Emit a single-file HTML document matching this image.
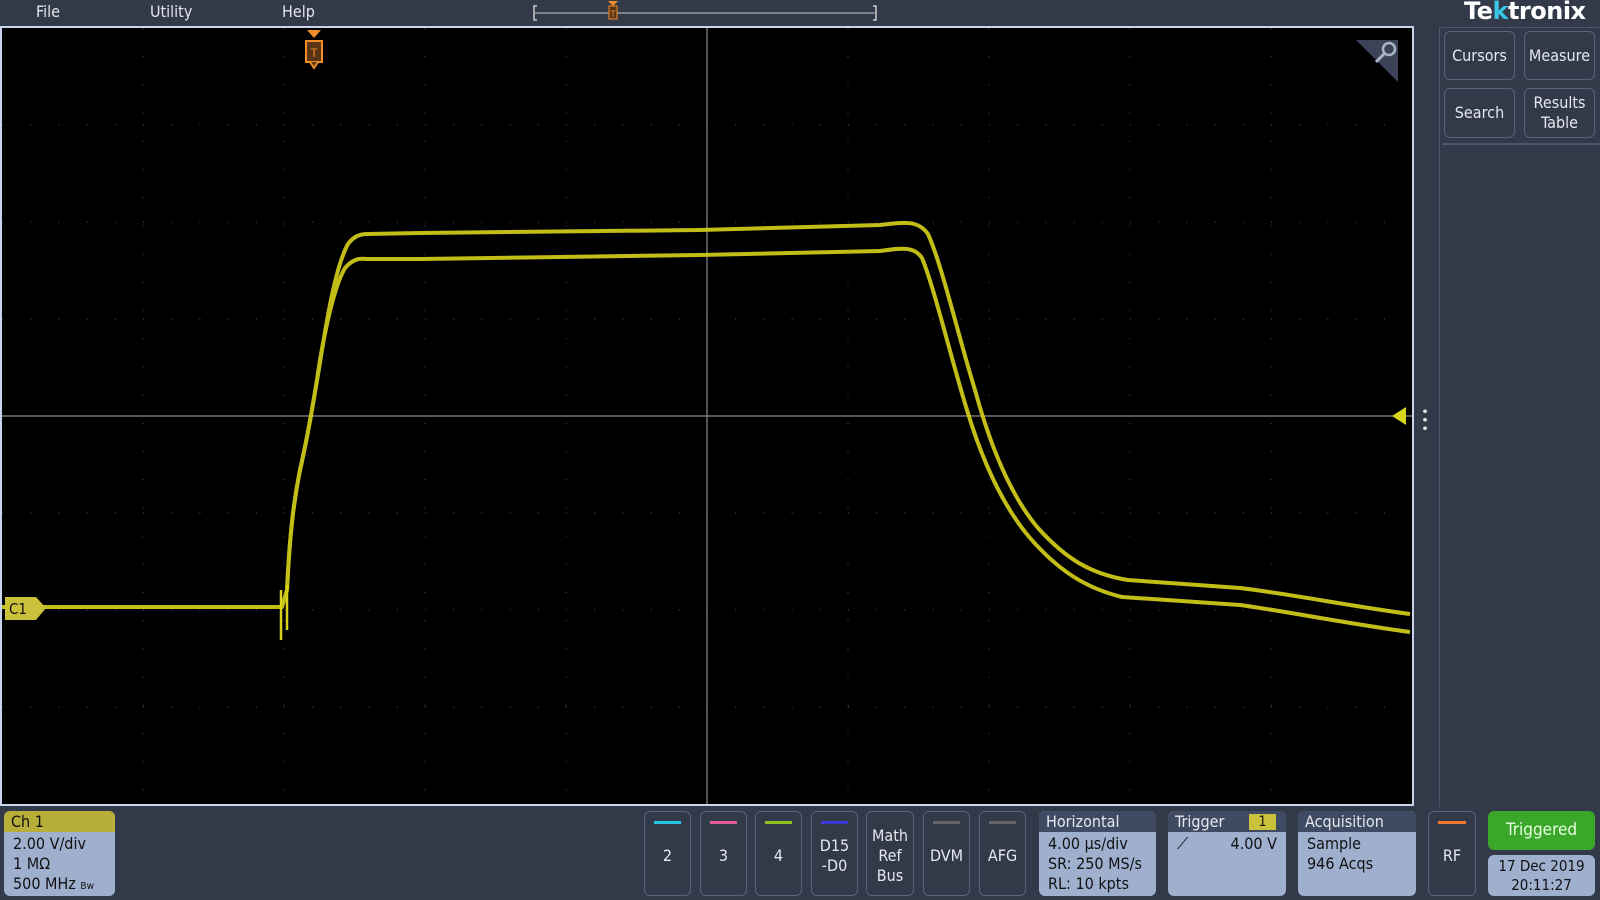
<!DOCTYPE html>
<html><head><meta charset="utf-8"><style>
*{margin:0;padding:0;box-sizing:border-box}
body{width:1600px;height:900px;background:#323948;font-family:"DejaVu Sans Condensed","Liberation Sans",sans-serif;color:#e6e8ee;position:relative;overflow:hidden}
.a{position:absolute}
.menu{font-size:16px;top:2px;color:#e4e6ec}
.btn{position:absolute;border:1px solid #59627a;border-radius:6px;background:#323948;color:#e6e8ee;font-size:16px;text-align:center;display:flex;align-items:center;justify-content:center;line-height:20px}
.bb{position:absolute;top:811px;height:85px;border:1px solid #59627a;border-radius:6px;text-align:center;font-size:16px;color:#e6e8ee}
.bb .ln{position:absolute;left:9px;right:9px;top:9px;height:3px}
.bb .tx{position:absolute;left:0;right:0;top:0;bottom:0;display:flex;align-items:center;justify-content:center;line-height:20px;padding-top:4px}
.panel{position:absolute;top:811px;height:85px;border-radius:6px;background:#9fb0cf;color:#111;font-size:16px;overflow:hidden}
.panel .hd{height:21px;background:#3f4b63;color:#e6e8ee;padding-left:7px;line-height:21px}
.panel .bd{padding:2px 9px;line-height:20px}
</style></head><body>
<div class="a menu" style="left:36px">File</div>
<div class="a menu" style="left:150px">Utility</div>
<div class="a menu" style="left:282px">Help</div>
<svg class="a" style="left:530px;top:0" width="350" height="27">
<path d="M7 6H4V20H7M343 6H346V20H343" stroke="#ccc" fill="none" stroke-width="1.5"/>
<line x1="5" y1="13" x2="345" y2="13" stroke="#999" stroke-width="1.5"/>
<path d="M78 1h10l-5 5z" fill="#f28c28"/>
<rect x="79" y="6" width="8" height="13" fill="#5a3515" stroke="#f28c28"/>
<text x="83" y="17" font-size="9" fill="#f28c28" text-anchor="middle" font-family="Liberation Sans">T</text>
</svg>
<div class="a" style="left:0;top:26px;width:1414px;height:780px;background:#c8d4ee"></div>
<svg class="a" style="left:2px;top:28px" width="1410" height="776" viewBox="2 28 1410 776">
<rect x="2" y="28" width="1410" height="776" fill="#000"/>
<g stroke="#555" stroke-width="1" stroke-dasharray="1 27.2">
<line x1="143" y1="28" x2="143" y2="804"/><line x1="284" y1="28" x2="284" y2="804"/><line x1="425" y1="28" x2="425" y2="804"/><line x1="566" y1="28" x2="566" y2="804"/><line x1="848" y1="28" x2="848" y2="804"/><line x1="989" y1="28" x2="989" y2="804"/><line x1="1130" y1="28" x2="1130" y2="804"/><line x1="1271" y1="28" x2="1271" y2="804"/>
</g>
<g stroke="#555" stroke-width="1" stroke-dasharray="1 27.2">
<line x1="2" y1="125" x2="1412" y2="125"/><line x1="2" y1="222" x2="1412" y2="222"/><line x1="2" y1="319" x2="1412" y2="319"/><line x1="2" y1="513" x2="1412" y2="513"/><line x1="2" y1="610" x2="1412" y2="610"/><line x1="2" y1="707" x2="1412" y2="707"/>
</g>
<g stroke="#8a8a8a" stroke-width="1.2">
<line x1="707" y1="28" x2="707" y2="804"/><line x1="2" y1="416" x2="1412" y2="416"/>
</g>
<g stroke="#d8d21a" stroke-width="4" fill="none" opacity=".9" stroke-linejoin="round">
<path d="M2 607H282L287 590C290 530 294 500 300 470C307 440 314 400 322 350C330 300 338 262 348 244C354 236 360 234 368 234L420 233L700 230L880 225C905 222 918 220 928 234C942 265 958 335 975 390C990 445 1010 495 1038 528C1065 558 1090 574 1128 580L1240 588C1290 594 1350 606 1410 614"/>
<path d="M287 590C290 530 294 500 300 470C307 440 314 400 320 360C327 320 335 285 345 268C352 260 358 258 366 259L420 259L700 255L880 251C902 248 914 246 922 258C935 290 950 355 967 410C982 460 1002 505 1030 538C1058 570 1085 588 1122 597L1240 605C1290 612 1350 624 1410 632"/>
</g>
<path d="M281 590V640M287 585V630" stroke="#d8d21a" stroke-width="2.5"/>
<path d="M307 30h14l-7 8z" fill="#f28c28"/>
<rect x="306" y="41" width="16" height="21" fill="#5a3515" stroke="#f28c28" stroke-width="2"/>
<path d="M310 62l4 6l4-6" fill="#5a3515" stroke="#f28c28" stroke-width="2"/>
<text x="314" y="57" font-size="12" fill="#f28c28" text-anchor="middle" font-family="Liberation Sans">T</text>
<path d="M1356 40H1398V82Z" fill="#3c4356"/>
<circle cx="1389" cy="49" r="6" stroke="#aab3c8" stroke-width="2.5" fill="none"/>
<line x1="1384" y1="54" x2="1376" y2="62" stroke="#aab3c8" stroke-width="3"/>
<path d="M1392 416L1406 407V425Z" fill="#d8d21a"/>
<path d="M5 597H36L46 608L36 620H5Z" fill="#c9c13a"/>
<text x="9" y="614" font-size="15" fill="#111" font-family="DejaVu Sans Condensed">C1</text>
</svg>
<div class="a" style="left:1423px;top:407px;width:4px;height:25px;background:radial-gradient(circle,#ddd 1.8px,transparent 2px) 0 0/4px 8.5px"></div>
<div class="a" style="left:1439px;top:27px;width:161px;height:1px;background:#4d5569"></div>
<div class="a" style="left:1439px;top:27px;width:1px;height:780px;background:#4d5569"></div>
<div class="a" style="left:1442px;top:143px;width:158px;height:2px;background:#4d5569"></div>
<div class="a" style="left:1464px;top:-3px;font:bold 24px 'DejaVu Sans',sans-serif;color:#fff;letter-spacing:-0.5px">Te<span style="color:#39c6e6">k</span>tronix</div>
<div class="btn" style="left:1444px;top:31px;width:71px;height:49px">Cursors</div>
<div class="btn" style="left:1524px;top:31px;width:71px;height:49px">Measure</div>
<div class="btn" style="left:1444px;top:88px;width:71px;height:50px">Search</div>
<div class="btn" style="left:1524px;top:88px;width:71px;height:50px">Results<br>Table</div>

<div class="panel" style="left:4px;width:111px"><div class="hd" style="background:#b8ae3a;color:#111">Ch 1</div><div class="bd" style="padding-left:9px">2.00 V/div<br>1 MΩ<br>500 MHz <span style="font-size:10px">Bw</span></div></div>
<div class="bb" style="left:644px;width:47px"><div class="ln" style="background:#26c6e0"></div><div class="tx">2</div></div>
<div class="bb" style="left:700px;width:47px"><div class="ln" style="background:#e05c9a"></div><div class="tx">3</div></div>
<div class="bb" style="left:755px;width:47px"><div class="ln" style="background:#8cc21e"></div><div class="tx">4</div></div>
<div class="bb" style="left:811px;width:47px"><div class="ln" style="background:#3a3ad8"></div><div class="tx">D15<br>-D0</div></div>
<div class="bb" style="left:866px;width:48px"><div class="tx">Math<br>Ref<br>Bus</div></div>
<div class="bb" style="left:923px;width:47px"><div class="ln" style="background:#666"></div><div class="tx">DVM</div></div>
<div class="bb" style="left:979px;width:47px"><div class="ln" style="background:#666"></div><div class="tx">AFG</div></div>
<div class="panel" style="left:1039px;width:117px"><div class="hd">Horizontal</div><div class="bd">4.00 μs/div<br>SR: 250 MS/s<br>RL: 10 kpts</div></div>
<div class="panel" style="left:1168px;width:118px"><div class="hd">Trigger <span style="position:absolute;left:81px;top:3px;width:27px;height:16px;background:#c9c13a;color:#111;line-height:16px;text-align:center;font-size:14px">1</span></div><div class="bd"><span style="font-size:16px">⟋</span><span style="float:right">4.00 V</span></div></div>
<div class="panel" style="left:1298px;width:118px"><div class="hd">Acquisition</div><div class="bd">Sample<br>946 Acqs</div></div>
<div class="bb" style="left:1428px;width:48px"><div class="ln" style="background:#f07830"></div><div class="tx">RF</div></div>
<div class="a" style="left:1488px;top:811px;width:107px;height:39px;background:#3aa72a;border-radius:6px;color:#e8ffe0;font-size:17px;text-align:center;line-height:39px">Triggered</div>
<div class="a" style="left:1488px;top:855px;width:107px;height:41px;background:#9fb0cf;border-radius:6px;color:#111;font-size:15px;text-align:center;line-height:19px;padding-top:2px">17 Dec 2019<br>20:11:27</div>
</body></html>
